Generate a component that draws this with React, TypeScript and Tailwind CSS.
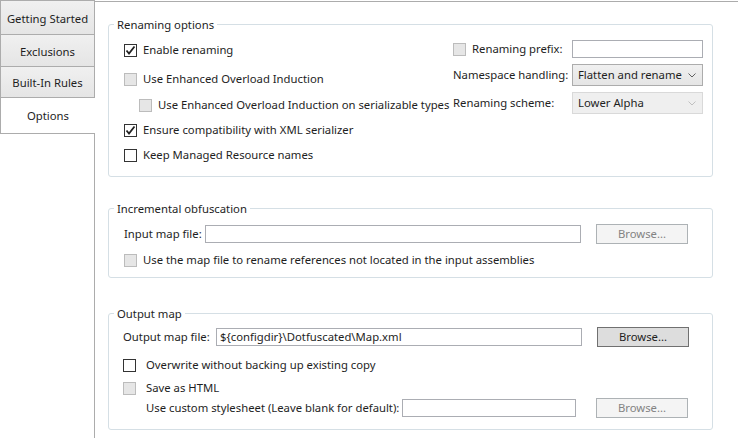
import React from "react";

const FONT = { fontFamily: '"Noto Sans", "Open Sans", sans-serif' };

function Check({ checked = false, disabled = false }: { checked?: boolean; disabled?: boolean }) {
  return (
    <div
      className={
        "w-[13px] h-[13px] shrink-0 border flex items-center justify-center " +
        (disabled ? "bg-[#e6e6e6] border-[#bcbcbc]" : "bg-white border-[#333333]")
      }
    >
      {checked && (
        <svg width="11" height="11" viewBox="0 0 11 11">
          <path d="M1.5 5.5 L4 8.5 L9.5 1.5" fill="none" stroke="#212121" strokeWidth="1.8" />
        </svg>
      )}
    </div>
  );
}

function Chevron({ light = false }: { light?: boolean }) {
  return (
    <svg width="8" height="5" viewBox="0 0 8 5">
      <path d="M0.5 0.5 L4 4 L7.5 0.5" fill="none" stroke={light ? "#c0c0c0" : "#606060"} strokeWidth="1" />
    </svg>
  );
}

function Button({ disabled = false }: { disabled?: boolean }) {
  return (
    <div
      className={
        "w-[92px] h-[20px] border flex items-center justify-center " +
        (disabled
          ? "bg-[#f4f4f4] border-[#adb2b5] text-[#838383]"
          : "bg-[#dddddd] border-[#707070] text-[#1e1e1e]")
      }
    >
      Browse...
    </div>
  );
}

function Group({ title, className, children }: { title: string; className: string; children: React.ReactNode }) {
  return (
    <div className={"relative border border-[#d5dfe5] rounded-[3px] " + className}>
      <div className="absolute left-[5px] top-[-9px] bg-white px-[3px] leading-[18px] text-[#1e1e1e] whitespace-nowrap">
        {title}
      </div>
      {children}
    </div>
  );
}

function Tab({ label, h, selected = false }: { label: string; h: string; selected?: boolean }) {
  return (
    <div
      className={
        "flex items-center justify-center border-l border-[#acacac] whitespace-nowrap " +
        h +
        (selected
          ? " bg-white border-t border-b border-r-0"
          : " bg-gradient-to-b from-[#f0f0f0] to-[#e5e5e5] border-t border-r")
      }
    >
      {label}
    </div>
  );
}

export default function App() {
  return (
    <div
      className="w-[738px] h-[438px] bg-white flex text-[#1e1e1e] text-[11.3px] overflow-hidden whitespace-nowrap"
      style={FONT}
    >
      <div className="w-[95px] shrink-0 flex flex-col">
        <Tab label="Getting Started" h="h-[34px] pt-[4px]" />
        <Tab label="Exclusions" h="h-[32px] pt-[4px]" />
        <Tab label="Built-In Rules" h="h-[31px] pt-[2px]" />
        <Tab label="Options" h="h-[37px] pt-[2px]" selected />
        <div className="flex-1 border-r border-[#acacac]" />
      </div>
      <div className="flex-1 mt-px border-t border-[#acacac] pl-[13px] pt-[22px]">
        <Group title="Renaming options" className="w-[605px] h-[153px] flex">
          <div className="w-[330px] pl-[15px] pt-[16px] flex flex-col">
            <div className="h-[18px] flex items-center gap-[6px]">
              <Check checked />
              <span>Enable renaming</span>
            </div>
            <div className="h-[18px] mt-[11px] flex items-center gap-[6px]">
              <Check disabled />
              <span>Use Enhanced Overload Induction</span>
            </div>
            <div className="h-[18px] mt-[8px] pl-[15px] flex items-center gap-[6px]">
              <Check disabled />
              <span>Use Enhanced Overload Induction on serializable types</span>
            </div>
            <div className="h-[18px] mt-[7px] flex items-center gap-[6px]">
              <Check checked />
              <span>Ensure compatibility with XML serializer</span>
            </div>
            <div className="h-[18px] mt-[7px] flex items-center gap-[6px]">
              <Check />
              <span>Keep Managed Resource names</span>
            </div>
          </div>
          <div className="pl-[14px] pt-[15px] flex flex-col">
            <div className="h-[18px] flex items-center">
              <div className="w-[119px] flex items-center gap-[6px]">
                <Check disabled />
                <span>Renaming prefix:</span>
              </div>
              <div className="w-[131px] h-[18px] border border-[#abadb3] bg-white" />
            </div>
            <div className="h-[22px] mt-[6px] flex items-center">
              <div className="w-[119px]">Namespace handling:</div>
              <div className="w-[131px] h-[22px] border border-[#acacac] bg-gradient-to-b from-[#f0f0f0] to-[#e5e5e5] flex items-center justify-between pl-[5px] pr-[6px]">
                <span>Flatten and rename</span>
                <Chevron />
              </div>
            </div>
            <div className="h-[22px] mt-[6px] flex items-center">
              <div className="w-[119px]">Renaming scheme:</div>
              <div className="w-[131px] h-[22px] border border-[#d9d9d9] bg-[#efefef] flex items-center justify-between pl-[5px] pr-[6px]">
                <span>Lower Alpha</span>
                <Chevron light />
              </div>
            </div>
          </div>
        </Group>

        <Group title="Incremental obfuscation" className="w-[605px] h-[70px] mt-[31px] pl-[15px] pt-[15px] flex flex-col">
          <div className="h-[20px] flex items-center">
            <span className="w-[81px]">Input map file:</span>
            <div className="w-[376px] h-[18px] border border-[#abadb3] bg-white" />
            <div className="ml-[15px]">
              <Button disabled />
            </div>
          </div>
          <div className="h-[18px] mt-[7px] flex items-center gap-[6px]">
            <Check disabled />
            <span>Use the map file to rename references not located in the input assemblies</span>
          </div>
        </Group>

        <Group title="Output map" className="w-[605px] h-[117px] mt-[35px] pl-[14px] pt-[13px] flex flex-col">
          <div className="h-[20px] flex items-center">
            <span className="w-[93px]">Output map file:</span>
            <div className="w-[366px] h-[18px] border border-[#abadb3] bg-white flex items-center pl-[3px]">
              {"${configdir}\\Dotfuscated\\Map.xml"}
            </div>
            <div className="ml-[15px]">
              <Button />
            </div>
          </div>
          <div className="h-[18px] mt-[9px] flex items-center gap-[10px]">
            <Check />
            <span>Overwrite without backing up existing copy</span>
          </div>
          <div className="h-[18px] mt-[5px] flex items-center gap-[10px]">
            <Check disabled />
            <span>Save as HTML</span>
          </div>
          <div className="h-[20px] mt-[1px] pl-[23px] flex items-center">
            <span className="w-[256px]">Use custom stylesheet (Leave blank for default):</span>
            <div className="w-[174px] h-[18px] border border-[#abadb3] bg-white" />
            <div className="ml-[20px]">
              <Button disabled />
            </div>
          </div>
        </Group>
      </div>
    </div>
  );
}
